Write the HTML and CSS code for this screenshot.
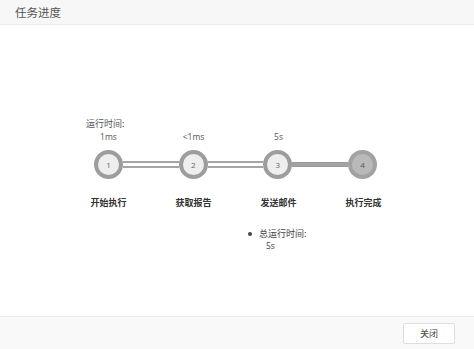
FILE: index.html
```html
<!DOCTYPE html>
<html lang="zh">
<head>
<meta charset="utf-8">
<link rel="stylesheet" href="styles.css">
</head>
<body>
<div class="dialog">
  <div class="header">任务进度</div>
  <div class="content">
    <div class="run-label">运行时间:</div>
    <div class="times">
      <div class="cell">1ms</div>
      <div class="cell">&lt;1ms</div>
      <div class="cell">5s</div>
      <div class="cell"></div>
    </div>
    <div class="track">
      <div class="dot">1</div>
      <div class="line double"></div>
      <div class="dot">2</div>
      <div class="line double"></div>
      <div class="dot">3</div>
      <div class="line solid"></div>
      <div class="dot done">4</div>
    </div>
    <div class="labels">
      <div class="cell">开始执行</div>
      <div class="cell">获取报告</div>
      <div class="cell">发送邮件</div>
      <div class="cell">执行完成</div>
    </div>
    <div class="summary">
      <div class="sum-title"><span class="bullet"></span>总运行时间:</div>
      <div class="sum-value">5s</div>
    </div>
  </div>
  <div class="footer">
    <button class="btn">关闭</button>
  </div>
</div>
</body>
</html>
```

FILE: styles.css
```css
* { box-sizing: border-box; }
html, body { margin: 0; padding: 0; background: #fff; }
body {
  font-family: "Open Sans", "Noto Sans CJK SC", sans-serif;
  color: #333;
  width: 474px;
  height: 349px;
  overflow: hidden;
}
.dialog {
  display: flex;
  flex-direction: column;
  height: 349px;
}
.header {
  height: 25px;
  background: #f7f7f7;
  border-bottom: 1px solid #ececec;
  font-family: "Noto Sans CJK SC", sans-serif;
  font-size: 11.5px;
  line-height: 24px;
  padding-left: 15px;
  color: #555;
}
.content {
  flex: 1;
  padding-top: 93px;
  font-size: 9px;
}
.run-label {
  margin-left: 86px;
  line-height: 12px;
  height: 12px;
  color: #555;
  font-family: "Noto Sans CJK SC", sans-serif;
}
.times, .labels {
  display: flex;
  margin-left: 66px;
  width: 340px;
}
.cell {
  width: 85px;
  text-align: center;
}
.times {
  height: 13px;
  line-height: 13px;
  margin-top: 0;
  color: #555;
  font-size: 8.5px;
}
.track {
  display: flex;
  align-items: center;
  margin-left: 94px;
  margin-top: 7px;
  width: 283px;
  height: 29px;
}
.dot {
  width: 29px;
  height: 29px;
  border-radius: 50%;
  border: 4px solid #9d9d9d;
  background: #eeeeee;
  color: #666;
  font-size: 8px;
  display: flex;
  align-items: center;
  justify-content: center;
  flex: none;
}
.dot.done {
  background: #b9b9b9;
  border-color: #a2a2a2;
  color: #555;
}
.line { flex: 1; }
.line.double {
  height: 7px;
  border-top: 2px solid #a5a5a5;
  border-bottom: 2px solid #a5a5a5;
  background: #fff;
}
.line.solid {
  height: 5px;
  background: #a3a3a3;
  border-top: 1px solid #9a9a9a;
  border-bottom: 1px solid #9a9a9a;
}
.labels {
  margin-top: 17px;
  font-family: "Noto Sans CJK SC", sans-serif;
  font-weight: bold;
  color: #333;
  line-height: 13px;
}
.summary {
  margin-top: 19px;
  margin-left: 248px;
  font-family: "Noto Sans CJK SC", sans-serif;
  color: #444;
  line-height: 12px;
}
.sum-title {
  display: flex;
  align-items: center;
}
.bullet {
  width: 4px;
  height: 4px;
  background: #444;
  border-radius: 50%;
  margin-right: 7px;
}
.sum-value {
  margin-left: 18px;
  font-family: "Open Sans", sans-serif;
  font-size: 8.5px;
}
.footer {
  height: 33px;
  background: #f9f9f9;
  border-top: 1px solid #ececec;
  display: flex;
  justify-content: flex-end;
  align-items: center;
  padding-right: 19px;
}
.btn {
  width: 52px;
  height: 21px;
  background: #fff;
  border: 1px solid #dedede;
  border-radius: 2px;
  font-family: "Noto Sans CJK SC", sans-serif;
  font-size: 9px;
  color: #444;
  padding: 0;
}
```
